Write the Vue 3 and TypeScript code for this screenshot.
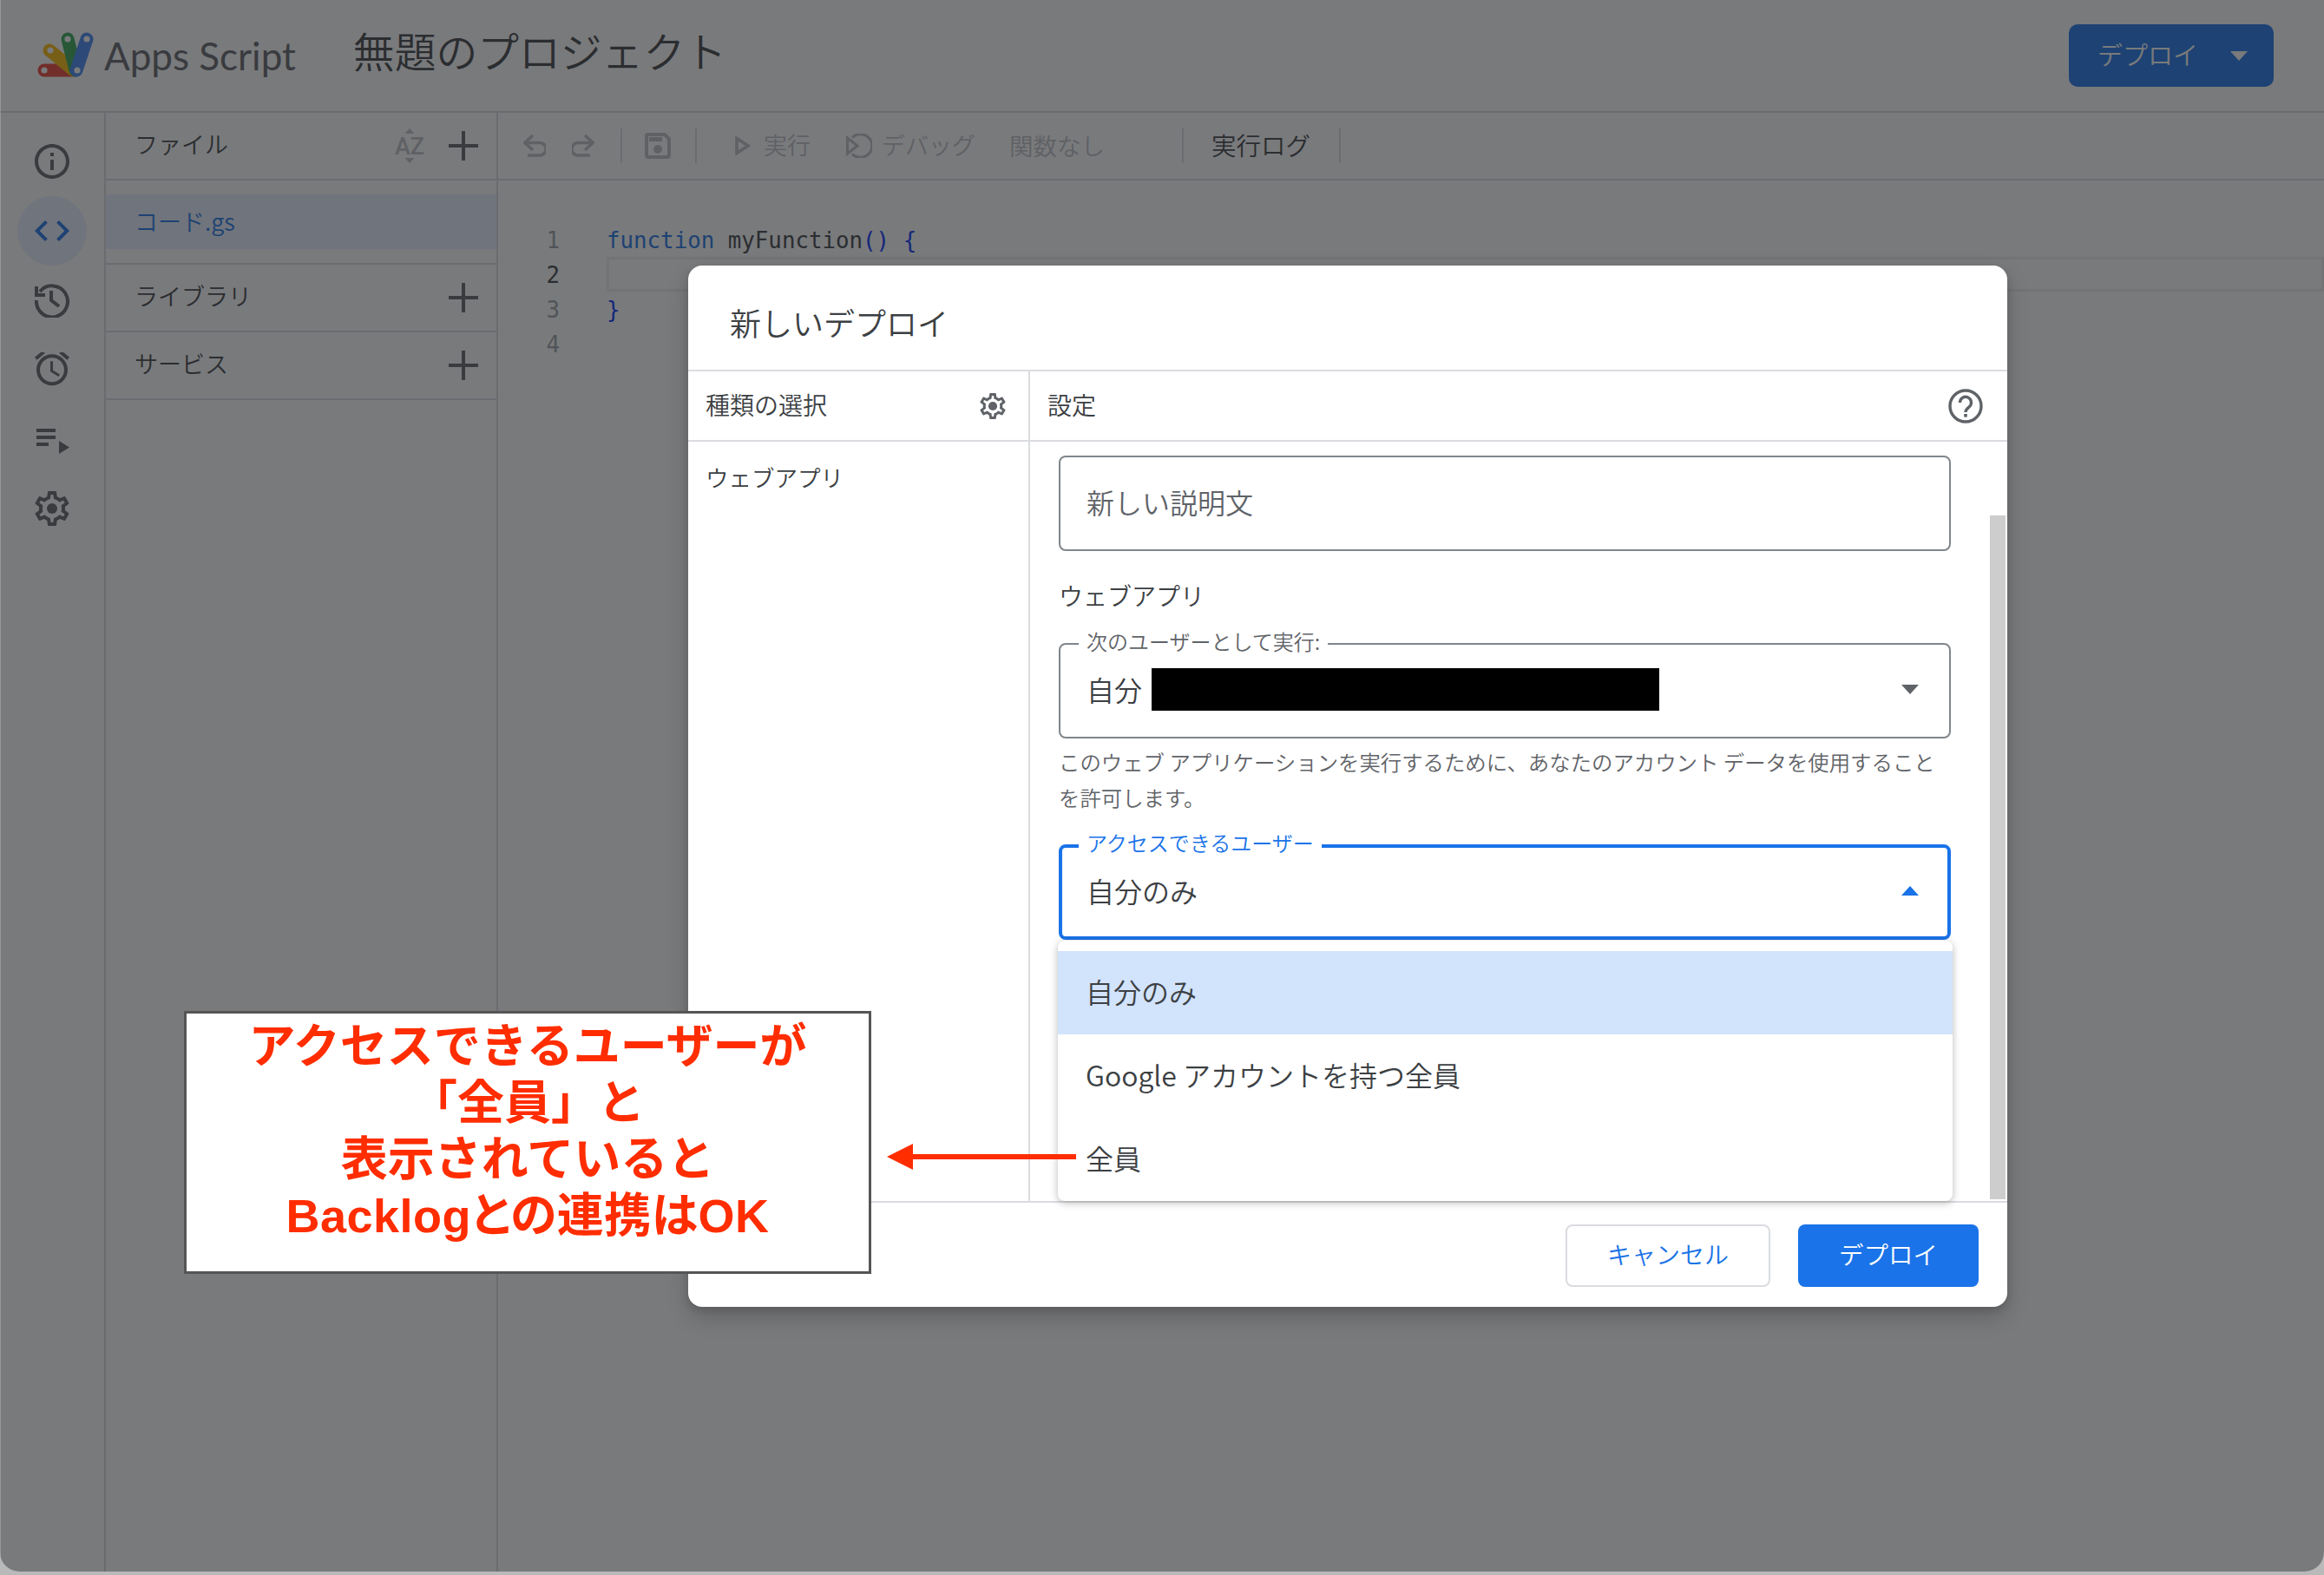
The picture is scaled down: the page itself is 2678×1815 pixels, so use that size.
<script setup lang="ts">
const files: string[] = ['ライブラリ', 'サービス']
const options: string[] = ['自分のみ', 'Google アカウントを持つ全員', '全員']
const codeLines: number[] = [1, 2, 3, 4]
</script>

<template>
  <div class="page">
    <div class="win">
      <header class="top">
        <svg class="logo" width="70" height="60" viewBox="0 0 70 60">
          <path d="M8 50H40" stroke="#ea4335" stroke-width="15" stroke-linecap="round" />
          <path d="M14 27L42 50" stroke="#fbbc04" stroke-width="15" stroke-linecap="round" />
          <path d="M35 14L44 50" stroke="#34a853" stroke-width="15" stroke-linecap="round" />
          <path d="M57 14L45 50" stroke="#4285f4" stroke-width="15" stroke-linecap="round" />
          <circle cx="8" cy="50" r="3.6" fill="#fff" />
          <circle cx="15" cy="27" r="3.6" fill="#fff" />
          <circle cx="35" cy="14" r="3.6" fill="#fff" />
          <circle cx="57" cy="14" r="3.6" fill="#fff" />
          <circle cx="46" cy="50" r="3.6" fill="#fff" />
        </svg>
        <span class="brand">Apps Script</span>
        <h1 class="project">無題のプロジェクト</h1>
        <button class="deploy-top">
          <span>デプロイ</span>
          <i class="tri-down white"></i>
        </button>
      </header>

      <div class="main">
        <nav class="rail">
          <svg class="rail-icon" viewBox="0 0 24 24"><path d="M11 7h2v2h-2zm0 4h2v6h-2zm1-9C6.48 2 2 6.48 2 12s4.48 10 10 10 10-4.48 10-10S17.52 2 12 2zm0 18c-4.41 0-8-3.59-8-8s3.59-8 8-8 8 3.59 8 8-3.59 8-8 8z" transform="translate(-2.4 -2.4) scale(1.2)" /></svg>
          <div class="rail-active">
            <svg class="rail-icon blue" viewBox="0 0 24 24"><path d="M9.4 16.6L4.8 12l4.6-4.6L8 6l-6 6 6 6 1.4-1.4zm5.2 0l4.6-4.6-4.6-4.6L16 6l6 6-6 6-1.4-1.4z" transform="translate(-2.4 -2.4) scale(1.2)" /></svg>
          </div>
          <svg class="rail-icon" viewBox="0 0 40 40">
            <path d="M6 10A18 18 0 1 1 2 20" fill="none" stroke="#5f6368" stroke-width="4" />
            <path d="M0 4h4v8h8v4H0z" />
            <path d="M19 9V20L28 27" fill="none" stroke="#5f6368" stroke-width="4" />
          </svg>
          <svg class="rail-icon" viewBox="0 0 24 24"><path d="M22 5.72l-4.6-3.86-1.29 1.53 4.6 3.86L22 5.72zM7.88 3.39L6.6 1.86 2 5.71l1.29 1.53 4.59-3.85zM12.5 8H11v6l4.75 2.85.75-1.23-4-2.37V8zM12 4c-4.97 0-9 4.03-9 9s4.02 9 9 9c4.97 0 9-4.03 9-9s-4.03-9-9-9zm0 16c-3.87 0-7-3.13-7-7s3.13-7 7-7 7 3.13 7 7-3.13 7-7 7z" transform="translate(-2.4 -3.4) scale(1.2)" /></svg>
          <svg class="rail-icon" viewBox="0 0 40 40">
            <path d="M2 8h22v4H2zM2 16h22v4H2zM2 24h14v4H2zM28 22l12 7.500-12 7.500z" />
          </svg>
          <svg class="rail-icon" viewBox="0 0 24 24">
            <g transform="translate(-2.4 -2.4) scale(1.2)">
              <path d="M19.43 12.98c.04-.32.07-.64.07-.98 0-.34-.03-.66-.07-.98l2.11-1.65c.19-.15.24-.42.12-.64l-2-3.46c-.09-.16-.26-.25-.44-.25-.06 0-.12.01-.17.03l-2.49 1c-.52-.4-1.08-.73-1.69-.98l-.38-2.65C14.46 2.18 14.25 2 14 2h-4c-.25 0-.46.18-.49.42l-.38 2.65c-.61.25-1.17.59-1.69.98l-2.49-1c-.06-.02-.12-.03-.18-.03-.17 0-.34.09-.43.25l-2 3.46c-.13.22-.07.49.12.64l2.11 1.65c-.04.32-.07.65-.07.98 0 .33.03.66.07.98l-2.11 1.65c-.19.15-.24.42-.12.64l2 3.46c.09.16.26.25.44.25.06 0 .12-.01.17-.03l2.49-1c.52.4 1.08.73 1.69.98l.38 2.65c.03.24.24.42.49.42h4c.25 0 .46-.18.49-.42l.38-2.65c.61-.25 1.17-.59 1.69-.98l2.49 1c.06.02.12.03.18.03.17 0 .34-.09.43-.25l2-3.46c.12-.22.07-.49-.12-.64l-2.11-1.65zm-1.98-1.71c.04.31.05.52.05.73 0 .21-.02.43-.05.73l-.14 1.13.89.7 1.08.84-.7 1.21-1.27-.51-1.04-.42-.9.68c-.43.32-.84.56-1.25.73l-1.06.43-.16 1.13-.2 1.35h-1.4l-.19-1.35-.16-1.13-1.06-.43c-.43-.18-.83-.41-1.23-.71l-.91-.7-1.06.43-1.27.51-.7-1.21 1.08-.84.89-.7-.14-1.13c-.03-.31-.05-.54-.05-.74s.02-.43.05-.73l.14-1.13-.89-.7-1.08-.84.7-1.21 1.27.51 1.04.42.9-.68c.43-.32.84-.56 1.25-.73l1.06-.43.16-1.13.2-1.35h1.39l.19 1.35.16 1.13 1.06.43c.43.18.83.41 1.23.71l.91.7 1.06-.43 1.27-.51.7 1.21-1.07.85-.89.7.14 1.13z" />
              <circle cx="12" cy="12" r="3" />
            </g>
          </svg>
        </nav>

        <aside class="panel">
          <div class="panel-head">
            <span class="row-text">ファイル</span>
            <span class="panel-tools">
              <svg class="az" width="36" height="40" viewBox="0 0 36 40">
                <path d="M18 0l5.500 6h-11zM18 40l5.500-6h-11z" />
                <text x="18" y="30" text-anchor="middle">AZ</text>
              </svg>
              <svg class="plus" viewBox="0 0 34 34"><path d="M15 0h4v15h15v4H19v15h-4V19H0v-4h15z" /></svg>
            </span>
          </div>
          <div class="file-list">
            <div class="file-item">コード.gs</div>
          </div>
          <div v-for="f in files" :key="f" class="panel-row">
            <span class="row-text">{{ f }}</span>
            <svg class="plus" viewBox="0 0 34 34"><path d="M15 0h4v15h15v4H19v15h-4V19H0v-4h15z" /></svg>
          </div>
        </aside>

        <section class="editor">
          <div class="toolbar">
            <svg class="tool" viewBox="0 0 26 26"><path d="M11 1L1.800 9.500 11 18M2 9.500h17a7.250 7.250 0 0 1 0 14.500H5" /></svg>
            <svg class="tool redo" viewBox="0 0 26 26"><path d="M15 1l9.200 8.500L15 18M24 9.500H7a7.250 7.250 0 0 0 0 14.500h14" /></svg>
            <i class="sep first"></i>
            <svg class="save" viewBox="0 0 30 30">
              <path d="M4 2h19l5 5v19a2 2 0 0 1-2 2H4a2 2 0 0 1-2-2V4a2 2 0 0 1 2-2z" class="outline" />
              <rect x="5" y="5" width="15" height="5" />
              <circle cx="15" cy="19" r="5" />
            </svg>
            <i class="sep second"></i>
            <svg class="play" viewBox="0 0 18 22"><path d="M2 2.500L15 11 2 19.500z" /></svg>
            <span class="dim run-label">実行</span>
            <svg class="debug" viewBox="0 0 30 28">
              <path d="M1.500 5L13 14 1.500 23z" />
              <path d="M7 4.500A13.400 13.400 0 1 1 7 23.500" />
            </svg>
            <span class="dim debug-label">デバッグ</span>
            <span class="dim fn-label">関数なし</span>
            <i class="sep third"></i>
            <span class="log-label">実行ログ</span>
            <i class="sep fourth"></i>
          </div>
          <div class="code">
            <div class="current-line"></div>
            <div class="gutter">
              <div v-for="n in codeLines" :key="n" :class="{ on: n === 2 }">{{ n }}</div>
            </div>
            <div class="src">
              <div><span class="kw">function</span> myFunction<span class="br">() {</span></div>
              <div>&nbsp;</div>
              <div><span class="br">}</span></div>
              <div>&nbsp;</div>
            </div>
          </div>
        </section>
      </div>

      <div class="scrim"></div>

      <div class="dialog">
        <div class="dialog-title">新しいデプロイ</div>
        <div class="dialog-heads">
          <div class="head-left">
            <span class="head-text">種類の選択</span>
            <svg class="small-gear" viewBox="0 0 24 24">
              <path d="M19.43 12.98c.04-.32.07-.64.07-.98 0-.34-.03-.66-.07-.98l2.11-1.65c.19-.15.24-.42.12-.64l-2-3.46c-.09-.16-.26-.25-.44-.25-.06 0-.12.01-.17.03l-2.49 1c-.52-.4-1.08-.73-1.69-.98l-.38-2.65C14.46 2.18 14.25 2 14 2h-4c-.25 0-.46.18-.49.42l-.38 2.65c-.61.25-1.17.59-1.69.98l-2.49-1c-.06-.02-.12-.03-.18-.03-.17 0-.34.09-.43.25l-2 3.46c-.13.22-.07.49.12.64l2.11 1.65c-.04.32-.07.65-.07.98 0 .33.03.66.07.98l-2.11 1.65c-.19.15-.24.42-.12.64l2 3.46c.09.16.26.25.44.25.06 0 .12-.01.17-.03l2.49-1c.52.4 1.08.73 1.69.98l.38 2.65c.03.24.24.42.49.42h4c.25 0 .46-.18.49-.42l.38-2.65c.61-.25 1.17-.59 1.69-.98l2.49 1c.06.02.12.03.18.03.17 0 .34-.09.43-.25l2-3.46c.12-.22.07-.49-.12-.64l-2.11-1.65zm-1.98-1.71c.04.31.05.52.05.73 0 .21-.02.43-.05.73l-.14 1.13.89.7 1.08.84-.7 1.21-1.27-.51-1.04-.42-.9.68c-.43.32-.84.56-1.25.73l-1.06.43-.16 1.13-.2 1.35h-1.4l-.19-1.35-.16-1.13-1.06-.43c-.43-.18-.83-.41-1.23-.71l-.91-.7-1.06.43-1.27.51-.7-1.21 1.08-.84.89-.7-.14-1.13c-.03-.31-.05-.54-.05-.74s.02-.43.05-.73l.14-1.13-.89-.7-1.08-.84.7-1.21 1.27.51 1.04.42.9-.68c.43-.32.84-.56 1.25-.73l1.06-.43.16-1.13.2-1.35h1.39l.19 1.35.16 1.13 1.06.43c.43.18.83.41 1.23.71l.91.7 1.06-.43 1.27-.51.7 1.21-1.07.85-.89.7.14 1.13z" />
              <circle cx="12" cy="12" r="3.4" />
            </svg>
          </div>
          <div class="head-right">
            <span class="head-text">設定</span>
            <svg class="help" viewBox="0 0 40 40">
              <circle cx="20" cy="20" r="18" fill="none" stroke="#5f6368" stroke-width="3.4" />
              <path d="M13.500 16a6.500 6.500 0 1 1 10.500 5c-2.500 2-4 3-4 6" fill="none" stroke="#5f6368" stroke-width="3.4" />
              <rect x="18.2" y="29" width="3.6" height="3.6" fill="#5f6368" />
            </svg>
          </div>
        </div>
        <div class="dialog-body">
          <div class="types">ウェブアプリ</div>
          <div class="settings">
            <div class="field input">新しい説明文</div>
            <div class="section-label">ウェブアプリ</div>
            <div class="field select">
              <span class="legend">次のユーザーとして実行:</span>
              <span class="value">自分</span>
              <span class="redact"></span>
              <i class="tri-down grey"></i>
            </div>
            <p class="helper">このウェブ アプリケーションを実行するために、あなたのアカウント データを使用することを許可します。</p>
            <div class="select-wrap">
              <div class="field select focused">
                <span class="legend">アクセスできるユーザー</span>
                <span class="value">自分のみ</span>
                <i class="tri-up"></i>
              </div>
              <ul class="menu">
                <li v-for="(o, i) in options" :key="o" :class="{ selected: i === 0 }">{{ o }}</li>
              </ul>
            </div>
            <div class="scrollbar"></div>
          </div>
        </div>
        <div class="dialog-foot">
          <button class="btn ghost">キャンセル</button>
          <button class="btn primary">デプロイ</button>
        </div>
      </div>

      <div class="note">
        <div>アクセスできるユーザーが</div>
        <div>「全員」と</div>
        <div>表示されていると</div>
        <div class="palt">Backlogとの連携はOK</div>
      </div>
      <svg class="note-arrow" width="218" height="32" viewBox="0 0 218 32">
        <path d="M0 16L30 1v12h188v6H30v12z" fill="#ff2d00" />
      </svg>
    </div>
  </div>
</template>

<style scoped>
.page {
  width: 2678px;
  height: 1815px;
  overflow: hidden;
  background: #b9b9b9;
  color: #3c4043;
  font-family: "Noto Sans CJK JP", Roboto, sans-serif;
  font-size: 27px;
  font-weight: 350;
}
.win {
  position: relative;
  height: 1811px;
  overflow: hidden;
  background: #fff;
  border-radius: 0 0 22px 22px;
}
svg { display: block; fill: #5f6368; flex: none; }

/* header */
.top {
  display: flex;
  align-items: center;
  height: 130px;
  box-sizing: border-box;
  border-bottom: 2px solid #dadce0;
  padding: 0 58px 0 43px;
}
.logo { margin-top: -7px; width: 70px; height: 60px; }
.brand {
  margin-left: 7px;
  font-family: Lato, Roboto, sans-serif;
  font-weight: 400;
  font-size: 44px;
  color: #5f6368;
}
.project {
  margin: -14px 0 0 66px;
  font-size: 47.8px;
  font-weight: 350;
  color: #3c4043;
}
.deploy-top {
  margin-left: auto;
  width: 236px;
  height: 72px;
  border: 0;
  border-radius: 10px;
  background: #1a73e8;
  color: #fff;
  font: inherit;
  font-size: 29px;
  display: flex;
  align-items: center;
  padding: 0 0 4px 33px;
}
.tri-down, .tri-up {
  display: block;
  width: 0;
  height: 0;
  border-left: 10px solid transparent;
  border-right: 10px solid transparent;
}
.tri-down { border-top: 11px solid #5f6368; }
.tri-up { border-bottom: 11px solid #1a73e8; }
.tri-down.white { border-top-color: #fff; margin: 4px 0 0 37px; }
.tri-down.grey, .focused .tri-up { margin-left: auto; margin-right: 35px; }

.main { display: flex; height: 1681px; }

/* left rail */
.rail {
  flex: none;
  width: 120px;
  border-right: 2px solid #dadce0;
  display: flex;
  flex-direction: column;
  align-items: center;
  padding-top: 36px;
  gap: 40px;
}
.rail-icon { width: 40px; height: 40px; }
.rail-icon.blue { fill: #1a73e8; }
.rail-active {
  width: 80px;
  height: 80px;
  margin: -20px 0;
  border-radius: 50%;
  background: #e8f0fe;
  display: flex;
  align-items: center;
  justify-content: center;
}

/* panel */
.panel {
  flex: none;
  width: 450px;
  border-right: 2px solid #dadce0;
}
.panel-head, .panel-row {
  display: flex;
  align-items: center;
  justify-content: space-between;
  box-sizing: border-box;
  padding: 0 21px 0 33px;
  border-bottom: 2px solid #dadce0;
}
.panel-head { height: 78px; }
.panel-row { height: 78px; }
.row-text { margin-top: -6px; }
.panel-tools { display: flex; align-items: center; gap: 27px; }
.az { fill: #bdc1c6; }
.az text { font: 500 27px Roboto, sans-serif; fill: #bdc1c6; }
.plus { width: 34px; height: 34px; }
.file-list {
  padding: 16px 0;
  border-bottom: 2px solid #dadce0;
}
.file-item {
  height: 63px;
  line-height: 61px;
  padding-left: 33px;
  background: #e8f0fe;
  color: #1a73e8;
}

/* editor */
.editor { flex: 1; min-width: 0; }
.toolbar {
  height: 78px;
  box-sizing: border-box;
  border-bottom: 2px solid #dadce0;
  display: flex;
  align-items: center;
  padding-left: 29px;
}
.tool { width: 26px; height: 26px; fill: none; stroke: #bdc1c6; stroke-width: 3.6; }
.redo { margin-left: 30px; }
.sep { display: block; width: 2px; height: 40px; background: #dadce0; }
.sep.first { margin-left: 30px; }
.save { width: 30px; height: 30px; margin-left: 26px; fill: #bdc1c6; }
.save .outline { fill: none; stroke: #bdc1c6; stroke-width: 4; }
.sep.second { margin-left: 28px; }
.play { width: 18px; height: 22px; margin-left: 44px; fill: none; stroke: #bdc1c6; stroke-width: 3.6; }
.dim { color: #bdc1c6; }
.run-label { margin-left: 15px; margin-top: -3px; }
.debug { width: 30px; height: 28px; margin-left: 41px; stroke: #bdc1c6; stroke-width: 3.2; fill: none; }
.debug-label { margin-left: 11px; margin-top: -3px; }
.fn-label { margin-left: 39px; margin-top: -3px; font-size: 27.5px; }
.sep.third { margin-left: 89px; }
.log-label { margin-left: 32px; margin-top: -3px; font-size: 28.5px; }
.sep.fourth { margin-left: 33px; }

.code {
  position: relative;
  display: flex;
  padding-top: 49px;
  font-family: "DejaVu Sans Mono", monospace;
  font-size: 25.8px;
  font-weight: 400;
  line-height: 40px;
}
.current-line {
  position: absolute;
  left: 125px;
  right: 0;
  top: 88px;
  height: 40px;
  box-sizing: border-box;
  border: 3px solid #eeeeee;
}
.gutter { width: 125px; box-sizing: border-box; padding-right: 54px; text-align: right; color: #9aa0a6; }
.gutter .on { color: #3c4043; }
.src { position: relative; color: #3c4043; }
.kw { color: #1a73e8; }
.br { color: #0431fa; }

/* scrim */
.scrim {
  position: absolute;
  inset: 0;
  box-sizing: border-box;
  border-left: 1px solid rgba(255, 255, 255, 0.22);
  background: rgba(32, 33, 36, 0.6);
}

/* dialog */
.dialog {
  position: absolute;
  left: 793px;
  top: 306px;
  width: 1520px;
  height: 1200px;
  background: #fff;
  border-radius: 16px;
  box-shadow: 0 12px 26px rgba(0, 0, 0, 0.18), 0 4px 10px rgba(0, 0, 0, 0.12);
  display: flex;
  flex-direction: column;
  overflow: hidden;
}
.dialog-title {
  height: 122px;
  box-sizing: border-box;
  padding-left: 48px;
  line-height: 130px;
  font-size: 36px;
  border-bottom: 2px solid #dadce0;
  flex: none;
}
.dialog-heads {
  display: flex;
  height: 81px;
  flex: none;
  border-bottom: 2px solid #dadce0;
  box-sizing: border-box;
}
.head-text { font-size: 28px; margin-top: -4px; }
.head-left {
  width: 394px;
  box-sizing: border-box;
  border-right: 2px solid #dadce0;
  display: flex;
  align-items: center;
  justify-content: space-between;
  padding: 0 23px 0 20px;
}
.small-gear { width: 36px; height: 36px; }
.head-right {
  flex: 1;
  display: flex;
  align-items: center;
  justify-content: space-between;
  padding: 0 28px 0 20px;
}
.help { width: 40px; height: 40px; }
.dialog-body { display: flex; flex: 1; min-height: 0; }
.types {
  width: 394px;
  box-sizing: border-box;
  border-right: 2px solid #dadce0;
  padding: 21px 0 0 20px;
  font-size: 26.5px;
}
.settings { position: relative; flex: 1; padding: 16px 0 0 33px; }
.field {
  position: relative;
  width: 1028px;
  height: 110px;
  box-sizing: border-box;
  border: 2px solid #80868b;
  border-radius: 8px;
  display: flex;
  align-items: center;
  padding: 0 0 4px 30px;
  font-size: 32px;
}
.field.input { color: #5f6368; }
.section-label { margin-top: 32px; margin-bottom: -1px; height: 40px; line-height: 38px; font-size: 28px; }
.select { margin-top: 35px; }
.legend {
  position: absolute;
  left: 21px;
  top: -18px;
  background: #fff;
  padding: 0 9px;
  font-size: 24px;
  line-height: 28px;
  color: #5f6368;
}
.redact {
  display: block;
  width: 585px;
  height: 49px;
  margin: 0 0 0 11px;
  background: #000;
}
.helper {
  margin: 6px 0 0;
  width: 1028px;
  font-size: 24.4px;
  line-height: 41px;
  color: #5f6368;
}
.select-wrap { position: relative; margin-top: 34px; }
.select-wrap .select { margin-top: 0; }
.focused { border: 4px solid #1a73e8; padding-left: 28px; }
.focused .legend { color: #1a73e8; left: 19px; top: -20px; }
.focused .tri-up { margin-right: 33px; }
.menu {
  position: absolute;
  left: -1px;
  width: 1031px;
  top: 111px;
  height: 300px;
  margin: 0;
  padding: 12px 0 0;
  list-style: none;
  box-sizing: border-box;
  background: #fff;
  border-radius: 8px;
  box-shadow: 0 2px 10px rgba(0, 0, 0, 0.28);
  font-size: 32px;
}
.menu li {
  height: 96px;
  line-height: 93px;
  padding-left: 32px;
}
.menu li.selected { background: #d2e3fc; }
.scrollbar {
  position: absolute;
  right: 2px;
  top: 85px;
  bottom: 2px;
  width: 18px;
  background: #cdcdcd;
}
.dialog-foot {
  flex: none;
  height: 122px;
  box-sizing: border-box;
  border-top: 2px solid #dadce0;
  display: flex;
  justify-content: flex-end;
  align-items: center;
  gap: 32px;
  padding: 2px 33px 0 0;
}
.btn {
  height: 72px;
  border-radius: 8px;
  font: inherit;
  font-size: 28px;
  padding: 0 0 5px;
}
.ghost { width: 236px; background: #fff; border: 2px solid #dadce0; color: #1a73e8; }
.primary { width: 208px; background: #1a73e8; border: 0; color: #fff; font-size: 28.5px; }

/* annotation */
.note {
  position: absolute;
  left: 212px;
  top: 1165px;
  width: 792px;
  height: 303px;
  box-sizing: border-box;
  border: 3px solid #555;
  background: #fff;
  color: #ff2d00;
  text-align: center;
  padding-top: 6px;
  font-family: "Liberation Sans", "Noto Sans CJK JP", sans-serif;
  font-weight: 700;
  font-size: 54px;
  line-height: 65px;
}
.palt { font-feature-settings: "palt" 1; letter-spacing: 0.5px; }
.note-arrow { position: absolute; left: 1022px; top: 1317px; }
</style>

<style>
html, body { margin: 0; background: #b9b9b9; }
</style>
